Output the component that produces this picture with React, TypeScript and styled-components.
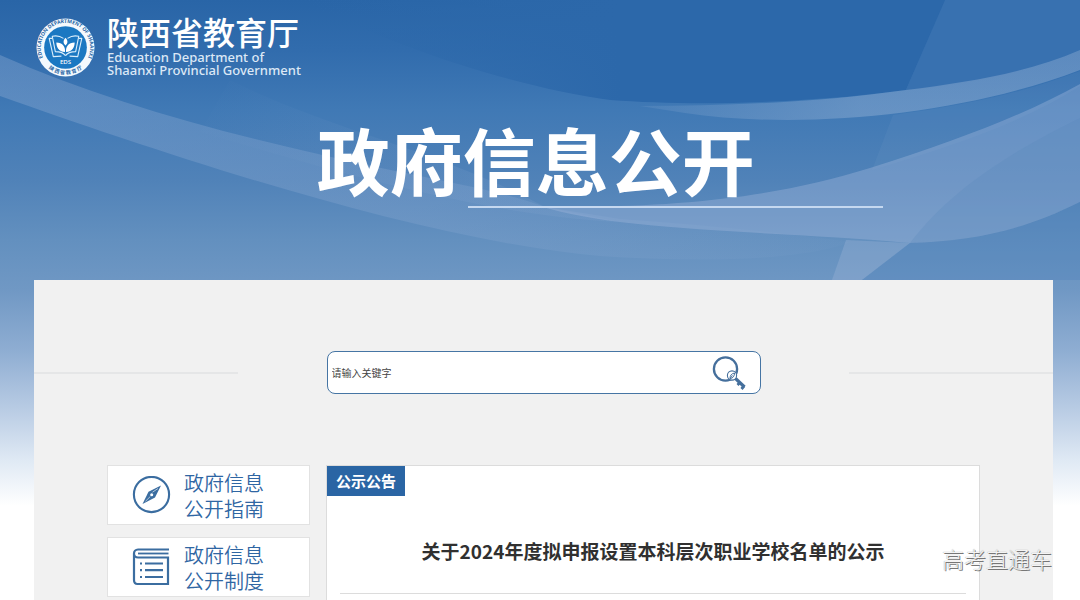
import React from "react";
import styled, { createGlobalStyle } from "styled-components";

const GlobalStyle = createGlobalStyle`
  *, *::before, *::after { box-sizing: border-box; }
  body {
    margin: 0;
    background: #fff;
    color: #303030;
    font-family: "Noto Sans CJK SC", "Noto Sans", sans-serif;
  }
`;

const Page = styled.div`
  position: relative;
  min-height: 100vh;
  overflow: hidden;
  background: linear-gradient(
    180deg,
    #2965a7 0,
    #316cad 50px,
    #4079b5 110px,
    #5082b8 180px,
    #6390bf 240px,
    #7098c4 290px,
    #8eadd2 350px,
    #b9cce4 410px,
    #dfe9f4 460px,
    #fff 506px
  );
`;

const Waves = styled.svg`
  position: absolute;
  inset: 0 0 auto 0;
  width: 100%;
  height: 280px;
`;

const Header = styled.header`
  position: relative;
  height: 280px;
  padding: 11px 36px 0;
`;

const Brand = styled.a`
  display: flex;
  align-items: flex-end;
  gap: 12px;
  width: max-content;
  color: #fff;
  text-decoration: none;
`;

const BrandText = styled.span`
  display: flex;
  flex-direction: column;
`;

const BrandName = styled.span`
  font-size: 32px;
  font-weight: 500;
  line-height: 40px;
`;

const BrandSub = styled.span`
  color: #dce8f6;
  font-family: "Noto Sans", "Open Sans", sans-serif;
  font-size: 13px;
  font-weight: 500;
  line-height: 13px;
`;

const Banner = styled.div`
  display: flex;
  flex-direction: column;
  width: 566px;
  margin: 38px 16% 0 auto;
`;

const BannerTitle = styled.h1`
  margin: 0;
  color: #fff;
  font-size: 73px;
  font-weight: 700;
  line-height: 86px;
  white-space: nowrap;
`;

const BannerRule = styled.hr`
  align-self: flex-end;
  width: 415px;
  height: 2px;
  margin: 5px 0 0;
  border: 0;
  background: #c5d8f0;
`;

const Panel = styled.main`
  position: relative;
  min-height: 320px;
  margin: 0 27px 0 34px;
  padding-top: 71px;
  background: #f1f1f1;
`;

const SearchRow = styled.div`
  display: flex;
  align-items: center;
  justify-content: space-between;
`;

const SideLine = styled.hr`
  flex: 0 0 20%;
  height: 2px;
  margin: 0;
  border: 0;
  background: #e5e6e7;
`;

const SearchForm = styled.form`
  display: flex;
  align-items: center;
  flex: 0 1 434px;
  height: 43px;
  padding: 0 12px 0 4px;
  border: 1px solid #4675a4;
  border-radius: 8px;
  background: #fff;
`;

const SearchInput = styled.input`
  flex: 1;
  min-width: 0;
  height: 36px;
  padding: 0;
  border: 0;
  outline: 0;
  background: transparent;
  color: #444;
  font: 10px "Noto Sans CJK SC", sans-serif;
  &::placeholder { color: #444; opacity: 1; }
`;

const SearchButton = styled.button`
  display: flex;
  padding: 0;
  border: 0;
  background: none;
  cursor: pointer;
`;

const Columns = styled.div`
  display: flex;
  align-items: flex-start;
  gap: 16px;
  padding: 71px 73px 0;
`;

const SideNav = styled.nav`
  display: flex;
  flex: 0 0 203px;
  flex-direction: column;
  gap: 12px;
`;

const NavCard = styled.a`
  display: flex;
  align-items: center;
  gap: 12px;
  height: 60px;
  padding: 2px 24px 0;
  border: 1px solid #e2e2e2;
  background: #fff;
  color: #2f66a3;
  font-size: 20px;
  font-weight: 350;
  line-height: 26px;
  text-decoration: none;
`;

const Article = styled.article`
  flex: 1;
  min-width: 0;
  padding-bottom: 24px;
  border: 1px solid #dcdcdc;
  background: #fff;
`;

const Tag = styled.span`
  display: block;
  width: max-content;
  padding: 0 9px;
  background: #2a65a4;
  color: #fff;
  font-size: 15px;
  font-weight: 700;
  line-height: 30px;
`;

const ArticleTitle = styled.h2`
  margin: 0 13px;
  padding: 39px 0 27px;
  border-bottom: 1px solid #dcdcdc;
  font-size: 19px;
  font-weight: 700;
  line-height: 31px;
  text-align: center;
`;

const Watermark = styled.span`
  position: absolute;
  right: 28px;
  top: 542px;
  color: #f4f4f4;
  font-size: 22px;
  font-weight: 300;
  line-height: 32px;
  text-shadow: 1px 1px 0 #777, 0 0 1px #888;
`;

const Emblem = () => (
  <svg width="59" height="59" viewBox="0 0 58 58" aria-hidden="true">
    <defs>
      <path id="ring-top" d="M7.800 40.700A24.200 24.200 0 1 1 50.200 40.700" />
      <path id="ring-bottom" d="M10 47.500A26.600 26.600 0 0 0 48 47.500" />
    </defs>
    <circle cx="29" cy="29" r="28.500" fill="#f4f9fd" />
    <circle cx="29" cy="29" r="21" fill="#1b78c2" />
    <text fill="#2866a5" fontFamily="Noto Sans, sans-serif" fontSize="5" fontWeight="700">
      <textPath href="#ring-top" startOffset="50%" textAnchor="middle">EDUCATION DEPARTMENT OF SHAANXI</textPath>
    </text>
    <text fill="#2866a5" fontFamily="Noto Sans CJK SC, sans-serif" fontSize="5" fontWeight="700">
      <textPath href="#ring-bottom" startOffset="50%" textAnchor="middle">陕 西 省 教 育 厅</textPath>
    </text>
    <g fill="none" stroke="#d9edfb" strokeWidth="1.100" strokeLinejoin="round">
      <path d="M29 37C27 34 23 33 19 33L16 18C20 17 24 18 27 20" />
      <path d="M29 37C31 34 35 33 39 33L42 18C38 17 34 18 31 20" />
      <path d="M16 20L13 20L17 38L25 37.500M42 20L45 20L41 38L33 37.500" />
    </g>
    <g fill="#fff">
      <path d="M28.500 33.500C22 33 20 28 20 24C26 24 29 28 28.500 33.500Z" />
      <path d="M29.500 33.500C36 33 38 28 38 24C32 24 29 28 29.500 33.500Z" />
      <path d="M29 27C26.500 25 26.500 22 29 19.500C31.500 22 31.500 25 29 27Z" />
    </g>
    <text x="29" y="45" fill="#fff" fontFamily="Noto Sans, sans-serif" fontSize="6" fontWeight="500" textAnchor="middle">EDS</text>
  </svg>
);

const SearchKey = () => (
  <svg width="36" height="36" viewBox="0 0 36 36" fill="none" stroke="#456f9c" aria-hidden="true">
    <circle cx="13.500" cy="14" r="11.600" strokeWidth="2.300" />
    <circle cx="20" cy="20.500" r="4.600" fill="#fff" strokeWidth="1.100" />
    <path d="M18 23.500C18 20.500 19.500 18.500 22.500 18C22.500 21 21 23.500 18 23.500ZM18 23.500L20.500 20.500" strokeWidth="1" />
    <path d="M23.500 23.500L32.500 32" strokeWidth="3.200" />
    <path d="M28 27.500L25.500 30M32 31L29.500 34" strokeWidth="2.800" />
  </svg>
);

const Compass = () => (
  <svg width="40" height="40" viewBox="0 0 40 40" aria-hidden="true">
    <circle cx="19.500" cy="18.500" r="17.600" fill="none" stroke="#3b6da0" strokeWidth="2.100" />
    <path d="M29 9.500L23 21.500L10.500 28L16.500 15.800Z" fill="#3b6da0" />
    <path d="M26 12.500L20.500 16.200M13.500 25.200L18.300 20.500" stroke="#fff" strokeWidth="0.600" />
    <circle cx="19.700" cy="18.700" r="1.500" fill="#fff" />
  </svg>
);

const Book = () => (
  <svg width="40" height="40" viewBox="0 1 40 40" fill="none" stroke="#3b6da0" aria-hidden="true">
    <path d="M37 2.500H6C3.500 2.500 2 4.500 2 6.500V33C2 35.500 3.500 37 5.500 37H36V10.500H6C3.500 10.500 2 8.500 2 6.500" strokeWidth="2.200" />
    <path d="M6 6.500H36.500" strokeWidth="1.800" />
    <path d="M13 16.500H31M13 23.200H31M13 30H31" strokeWidth="2.200" />
    <path d="M8 16.500H10M8 23.200H10M8 30H10" strokeWidth="2.200" />
  </svg>
);

const links = [
  { icon: <Compass />, lines: ["政府信息", "公开指南"] },
  { icon: <Book />, lines: ["政府信息", "公开制度"] },
];

export default function App() {
  return (
    <Page>
      <GlobalStyle />
      <Waves viewBox="0 0 1080 280" preserveAspectRatio="none" aria-hidden="true">
        <defs>
          <linearGradient id="deep" gradientUnits="userSpaceOnUse" x1="300" y1="0" x2="620" y2="0">
            <stop offset="0" stopColor="#2c68aa" stopOpacity="0" />
            <stop offset="1" stopColor="#2c68aa" />
          </linearGradient>
          <linearGradient id="tail" x1="0" y1="0" x2="1" y2="0">
            <stop offset="0" stopColor="#8aa9d2" stopOpacity="0.4" />
            <stop offset="0.5" stopColor="#8aa9d2" stopOpacity="0.3" />
            <stop offset="1" stopColor="#8aa9d2" stopOpacity="0.05" />
          </linearGradient>
          <linearGradient id="crest" gradientUnits="userSpaceOnUse" x1="620" y1="0" x2="860" y2="0">
            <stop offset="0" stopColor="#a3bbdb" stopOpacity="0.1" />
            <stop offset="1" stopColor="#a3bbdb" stopOpacity="0.38" />
          </linearGradient>
          <linearGradient id="mist" gradientUnits="userSpaceOnUse" x1="200" y1="70" x2="500" y2="190">
            <stop offset="0" stopColor="#8aa9d2" stopOpacity="0" />
            <stop offset="1" stopColor="#8aa9d2" stopOpacity="0.16" />
          </linearGradient>
        </defs>
        <path d="M300 0H945L906 90C800 104 690 106 610 100C520 88 400 50 300 0Z" fill="url(#deep)" />
        <path d="M945 0H1080V50C1030 72 970 84 906 90Z" fill="#3871b0" />
        <path d="M230 80C330 130 440 150 545 207L620 222C480 215 330 170 200 132Z" fill="url(#mist)" />
        <path d="M0 55C120 108 260 143 400 172C460 184 510 194 545 207L620 219C700 225 780 232 850 242C800 262 690 262 600 256C420 240 170 156 0 96Z" fill="url(#tail)" />
        <path d="M640 106C730 106 820 102 906 90C970 82 1030 72 1080 50V70C960 116 800 130 685 113Z" fill="url(#crest)" />
        <path d="M893 115L872 170C930 152 1010 130 1080 86V71C1020 94 960 106 893 115Z" fill="#6f9bca" fillOpacity="0.15" />
        <path d="M540 206C680 209 780 196 870 168C960 140 1030 112 1080 84V202C1020 232 970 241 910 243C780 231 620 232 540 206Z" fill="#a4b9dc" fillOpacity="0.38" />
        <path d="M1080 118C1010 152 950 190 910 243C970 241 1020 232 1080 202Z" fill="#5688bd" fillOpacity="0.25" />
        <path d="M846 240L910 243L862 280H832Z" fill="#a4b9dc" fillOpacity="0.3" />
        <path d="M910 243C970 241 1020 232 1080 202V280H862Z" fill="#4c80ba" fillOpacity="0.35" />
      </Waves>
      <Header>
        <Brand href="#">
          <Emblem />
          <BrandText>
            <BrandName>陕西省教育厅</BrandName>
            <BrandSub>Education Department of</BrandSub>
            <BrandSub>Shaanxi Provincial Government</BrandSub>
          </BrandText>
        </Brand>
        <Banner>
          <BannerTitle>政府信息公开</BannerTitle>
          <BannerRule />
        </Banner>
      </Header>
      <Panel>
        <SearchRow>
          <SideLine />
          <SearchForm onSubmit={(e: React.FormEvent) => e.preventDefault()}>
            <SearchInput type="text" aria-label="请输入关键字" placeholder="请输入关键字" />
            <SearchButton type="submit" aria-label="搜索">
              <SearchKey />
            </SearchButton>
          </SearchForm>
          <SideLine />
        </SearchRow>
        <Columns>
          <SideNav>
            {links.map(({ icon, lines }) => (
              <NavCard href="#" key={lines[1]}>
                {icon}
                <span>
                  {lines[0]}
                  <br />
                  {lines[1]}
                </span>
              </NavCard>
            ))}
          </SideNav>
          <Article>
            <Tag>公示公告</Tag>
            <ArticleTitle>关于2024年度拟申报设置本科层次职业学校名单的公示</ArticleTitle>
          </Article>
        </Columns>
      </Panel>
      <Watermark>高考直通车</Watermark>
    </Page>
  );
}
